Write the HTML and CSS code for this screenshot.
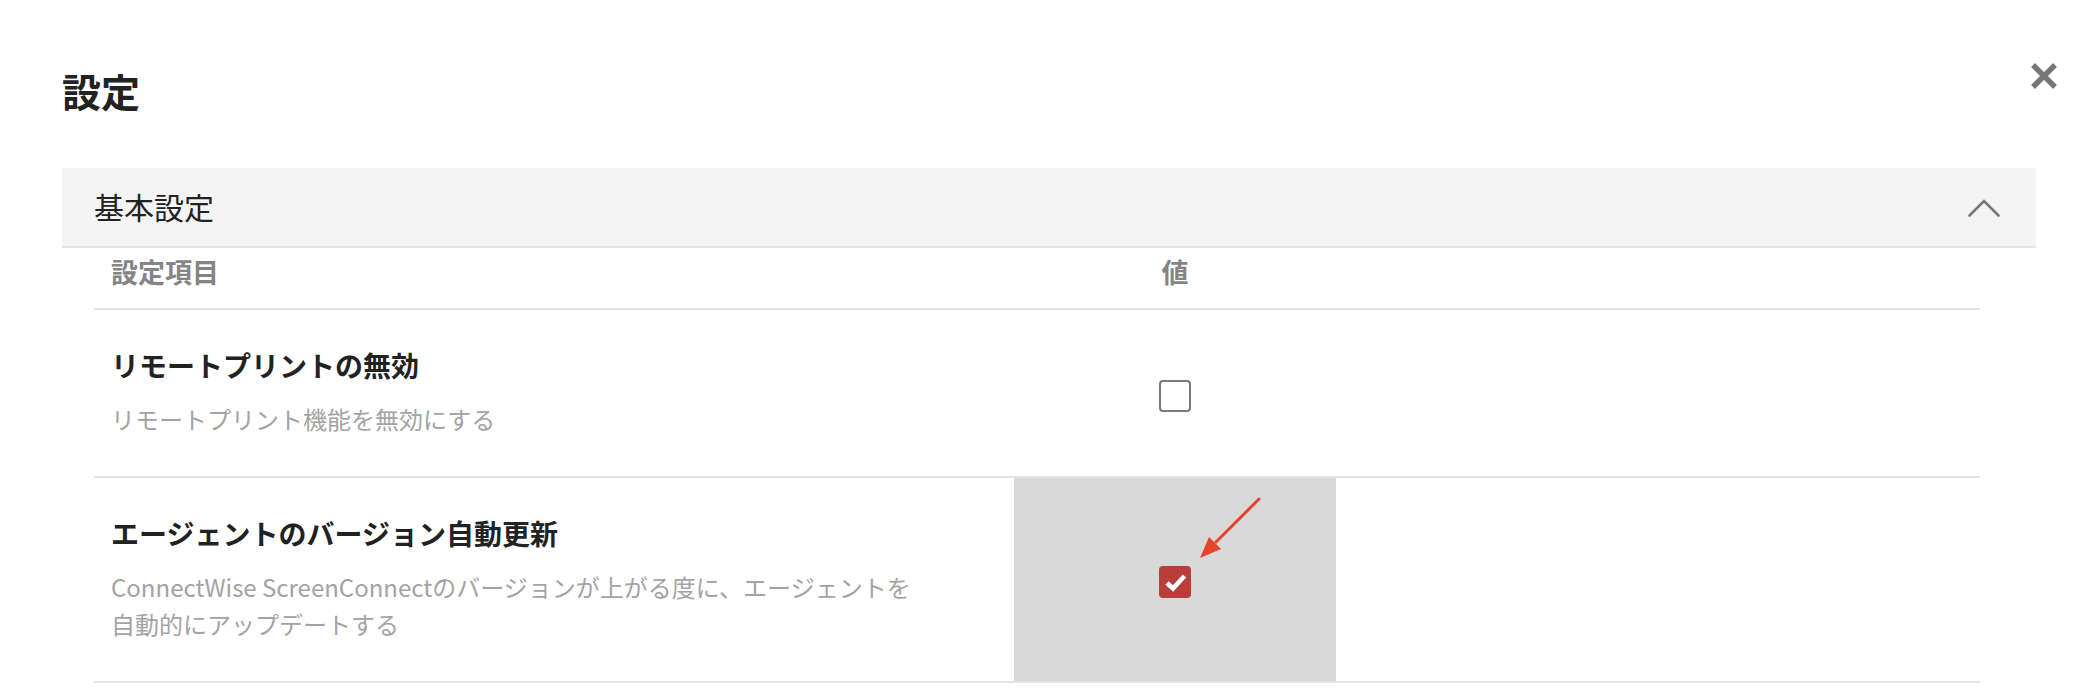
FILE: index.html
```html
<!DOCTYPE html>
<html lang="ja">
<head>
  <meta charset="UTF-8" />
  <meta name="viewport" content="width=device-width, initial-scale=1" />
  <title>設定</title>
<link rel="stylesheet" href="styles.css">
</head>
<body>

<div class="modal">
  <header class="modal-header">
    <h1>設定</h1>
    <button class="btn-close" title="閉じる">
      <svg width="28" height="28" viewBox="0 0 28 28">
        <path d="M3 3 L25 25 M25 3 L3 25" stroke="#777" stroke-width="5.5" fill="none" />
      </svg>
    </button>
  </header>

  <section class="panel">
    <div class="panel-head">
      <span>基本設定</span>
      <svg class="chevron" width="32" height="19" viewBox="0 0 32 19">
        <path d="M1.5 17.5 L16 3 L30.5 17.5" stroke="#777" stroke-width="2.6" fill="none" stroke-linecap="round" />
      </svg>
    </div>

    <div class="settings">
      <div class="row row-head">
        <div class="cell-name">設定項目</div>
        <div class="cell-value">値</div>
        <div class="cell-rest"></div>
      </div>

      <div class="row">
        <div class="cell-name">
          <h4>リモートプリントの無効</h4>
          <p>リモートプリント機能を無効にする</p>
        </div>
        <div class="cell-value">
          <span class="check"></span>
        </div>
        <div class="cell-rest"></div>
      </div>

      <div class="row">
        <div class="cell-name">
          <h4>エージェントのバージョン自動更新</h4>
          <p>ConnectWise ScreenConnectのバージョンが上がる度に、エージェントを自動的にアップデートする</p>
        </div>
        <div class="cell-value hover">
          <span class="check checked">
            <svg width="32" height="32" viewBox="0 0 32 32">
              <path d="M8 17 L14 22.5 L25.5 10" stroke="#fff" stroke-width="4.6" fill="none" />
            </svg>
          </span>
          <!-- 注釈の矢印 -->
          <svg class="pointer" width="80" height="80" viewBox="0 0 80 80">
            <path d="M67 5 L24 48" stroke="#e8432b" stroke-width="3" stroke-linecap="round" fill="none" />
            <path d="M8 64 L17 43 L29 55 Z" fill="#e8432b" />
          </svg>
        </div>
        <div class="cell-rest"></div>
      </div>
    </div>
  </section>
</div>

</body>
</html>
```

FILE: styles.css
```css
:root {
  --text: #222;
  --muted: #858585;
  --desc: #a3a3a3;
  --line: #e4e4e4;
  --band: #f4f4f4;
  --hover: #d9d9d9;
  --red: #b93e3a;
}

* {
  box-sizing: border-box;
}

body {
  margin: 0;
  font-family: "Noto Sans CJK JP", "Noto Sans", sans-serif;
  background: #fff;
  color: var(--text);
}

.modal {
  padding: 62px 20px 0 62px;
}

.modal-header {
  display: flex;
  justify-content: space-between;
  align-items: flex-start;
  margin-bottom: 50px;
}

.modal-header h1 {
  margin: 0;
  font-size: 39px;
  line-height: 56px;
  font-weight: 700;
}

.btn-close {
  border: none;
  background: none;
  padding: 0;
  width: 28px;
  height: 28px;
  cursor: pointer;
  display: block;
}

.btn-close svg {
  display: block;
}

/* 基本設定パネル */
.panel {
  margin-right: 22px;
}

.panel-head {
  height: 80px;
  background: var(--band);
  border-bottom: 2px solid var(--line);
  display: flex;
  align-items: center;
  justify-content: space-between;
  padding: 0 36px 0 32px;
  font-size: 30px;
}

.panel-head span {
  margin-top: -2px;
}

.settings {
  margin: 0 56px 0 32px;
}

.row {
  display: grid;
  grid-template-columns: 920px 322px 1fr;
  border-bottom: 2px solid var(--line);
}

.row-head {
  font-size: 27px;
  font-weight: 700;
  color: var(--muted);
  line-height: 36px;
}

.row-head .cell-name,
.row-head .cell-value {
  padding: 6px 0 18px;
}

.cell-name {
  padding: 35px 17px 39px;
}

.row-head .cell-name {
  padding-left: 17px;
}

.cell-name h4 {
  margin: 0;
  font-size: 28px;
  line-height: 40px;
  font-weight: 700;
  color: var(--text);
}

.cell-name p {
  margin: 15px 0 0;
  font-size: 24px;
  line-height: 37px;
  color: var(--desc);
  max-width: 800px;
}

.cell-value {
  display: flex;
  align-items: center;
  justify-content: center;
  position: relative;
}

.row:not(.row-head) .cell-value {
  padding-top: 5px;
}

.cell-value.hover {
  background: var(--hover);
}

.check {
  width: 32px;
  height: 32px;
  border: 2px solid #7a7a7a;
  border-radius: 4px;
  display: block;
}

.check.checked {
  border: none;
  background: var(--red);
}

.check svg {
  display: block;
}

.pointer {
  position: absolute;
  left: 178px;
  top: 16px;
}
```
